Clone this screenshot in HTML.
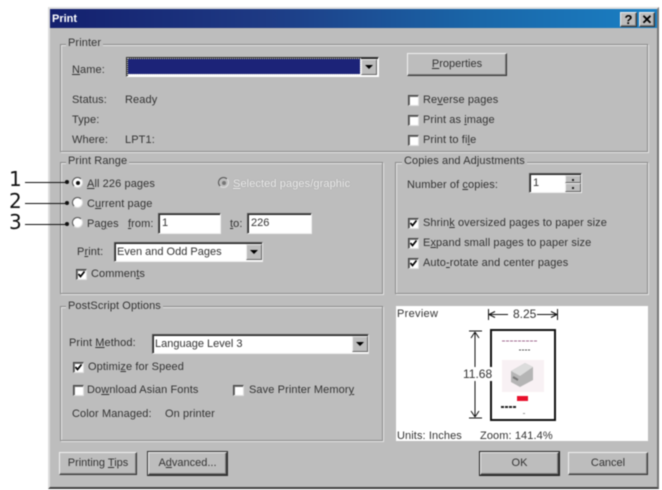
<!DOCTYPE html>
<html><head><meta charset="utf-8"><style>
html,body{margin:0;padding:0;width:662px;height:490px;overflow:hidden;background:#fff}
#w{position:relative;width:662px;height:490px;overflow:hidden;filter:blur(.5px);font-family:"Liberation Sans",sans-serif;font-size:11px;color:#333}
#w div{position:absolute;box-sizing:border-box}
.t{white-space:nowrap;line-height:14px;height:14px;letter-spacing:.1px}
.t.b{background:#bdbdbd;padding:0 2px}
.g{border:1px solid #8a8a8a;box-shadow:inset 1px 1px 0 #e6e6e6,1px 1px 0 #e6e6e6}
.btn{background:#bdbdbd;border:1px solid;border-color:#f0f0f0 #333 #333 #f0f0f0;box-shadow:inset -1px -1px 0 #808080;text-align:center;line-height:20px;white-space:nowrap}
.f{background:#fff;border:1px solid;border-color:#555 #eee #eee #555;box-shadow:inset 1px 1px 0 #222;line-height:18px;padding-left:3px;white-space:nowrap}
.c{width:11px;height:11px;background:#fff;border:1px solid;border-color:#444 #ddd #ddd #444;box-shadow:inset 1px 1px 0 #777}
.c svg{position:absolute;left:0;top:0}
.r{width:11px;height:11px;border-radius:50%;background:#fff;border:1px solid;border-color:#555 #ddd #ddd #555}
.r i{position:absolute;left:2.5px;top:2.5px;width:4px;height:4px;background:#111;border-radius:50%}
.a{background:#bdbdbd;border:1px solid;border-color:#eee #666 #666 #eee}
.a:after{content:"";position:absolute;left:3px;top:5px;border:4px solid transparent;border-top:4px solid #000;border-bottom:0}
.s{background:#bdbdbd;border:1px solid;border-color:#eee #666 #666 #eee}
.s i{position:absolute;left:6px;top:3px;width:2px;height:2px;background:#222}
.n{font-family:"DejaVu Sans",sans-serif;font-size:20px;color:#111;line-height:20px}
.l{background:#111;height:1px}
.dot{width:4px;height:4px;border-radius:50%;background:#111}
u{text-decoration:underline}
</style></head><body><div id="w">
<div style="left:48px;top:7px;width:611px;height:482px;background:#bdbdbd;border-top:2px solid #e2e2e2;border-left:2px solid #dcdcdc;border-right:2px solid #777;border-bottom:2px solid #444"></div>
<div style="left:50px;top:9px;width:607px;height:19px;background:linear-gradient(90deg,#14206e 0%,#1e3a84 35%,#1a66a8 70%,#1a80c4 100%)"></div>
<div class="t" style="left:52px;top:12px;color:#fff;font-weight:bold;letter-spacing:0">Print</div>
<div class="btn" style="left:620px;top:12px;width:17px;height:15px;line-height:13px;font-weight:bold;font-size:13px;color:#000;border-color:#eee #333 #333 #eee">?</div>
<div class="btn" style="left:639px;top:12px;width:16px;height:15px;line-height:13px;font-weight:bold;font-size:13px;color:#000;border-color:#eee #333 #333 #eee">✕</div>

<!-- Printer -->
<div class="g" style="left:60px;top:44px;width:588px;height:108px"></div>
<div class="t b" style="left:66px;top:36px">Printer</div>
<div class="t" style="left:72px;top:63px"><u>N</u>ame:</div>
<div class="f" style="left:126px;top:57px;width:253px;height:20px;padding:0;border-color:#333 #fff #fff #333"></div>
<div style="left:128px;top:59px;width:232px;height:15px;background:#1c2378;outline:1px dotted #ddd"></div>
<div class="a" style="left:361px;top:59px;width:16px;height:16px"></div>
<div class="t" style="left:72px;top:93px">Status:</div>
<div class="t" style="left:125px;top:93px">Ready</div>
<div class="t" style="left:72px;top:113px">Type:</div>
<div class="t" style="left:72px;top:133px">Where:</div>
<div class="t" style="left:125px;top:133px">LPT1:</div>
<div class="btn" style="left:407px;top:53px;width:100px;height:23px"><u>P</u>roperties</div>
<div class="c" style="left:408px;top:95px"></div><div class="t" style="left:423px;top:93px">Re<u>v</u>erse pages</div>
<div class="c" style="left:408px;top:115px"></div><div class="t" style="left:423px;top:113px">Print as <u>i</u>mage</div>
<div class="c" style="left:408px;top:135px"></div><div class="t" style="left:423px;top:133px">Print to fi<u>l</u>e</div>

<!-- Print Range -->
<div class="g" style="left:60px;top:162px;width:323px;height:132px"></div>
<div class="t b" style="left:66px;top:154px">Print Range</div>
<div class="r" style="left:72px;top:177px"><i></i></div><div class="t" style="left:87px;top:177px"><u>A</u>ll 226 pages</div>
<div class="r" style="left:218px;top:177px;background:#bdbdbd"><i style="background:#777"></i></div>
<div class="t" style="left:233px;top:177px;color:#eee;text-shadow:0 0 1px #888"><u>S</u>elected pages/graphic</div>
<div class="r" style="left:72px;top:197px"></div><div class="t" style="left:87px;top:197px">C<u>u</u>rrent page</div>
<div class="r" style="left:72px;top:217px"></div><div class="t" style="left:87px;top:217px">Pa<u>g</u>es</div>
<div class="t" style="left:128px;top:217px"><u>f</u>rom:</div>
<div class="f" style="left:158px;top:213px;width:63px;height:21px">1</div>
<div class="t" style="left:230px;top:217px"><u>t</u>o:</div>
<div class="f" style="left:247px;top:213px;width:65px;height:21px">226</div>
<div class="t" style="left:77px;top:245px">P<u>r</u>int:</div>
<div class="f" style="left:114px;top:242px;width:149px;height:20px;padding-left:2px">Even and Odd Pages</div>
<div class="a" style="left:246px;top:244px;width:16px;height:16px"></div>
<div class="c" style="left:76px;top:269px"><svg width="9" height="9"><path d="M1.5 4 L3.5 6.5 L7.5 1.5" stroke="#000" stroke-width="1.7" fill="none"/></svg></div>
<div class="t" style="left:91px;top:267px">Commen<u>t</u>s</div>

<!-- Copies -->
<div class="g" style="left:395px;top:162px;width:253px;height:132px"></div>
<div class="t b" style="left:402px;top:154px">Copies and Adjustments</div>
<div class="t" style="left:407px;top:178px">Number of <u>c</u>opies:</div>
<div class="f" style="left:529px;top:173px;width:53px;height:20px">1</div>
<div class="s" style="left:565px;top:175px;width:16px;height:8px"><i></i></div>
<div class="s" style="left:565px;top:183px;width:16px;height:9px"><i></i></div>
<div class="c" style="left:408px;top:218px"><svg width="9" height="9"><path d="M1.5 4 L3.5 6.5 L7.5 1.5" stroke="#000" stroke-width="1.7" fill="none"/></svg></div>
<div class="t" style="left:423px;top:216px">Shrin<u>k</u> oversized pages to paper size</div>
<div class="c" style="left:408px;top:238px"><svg width="9" height="9"><path d="M1.5 4 L3.5 6.5 L7.5 1.5" stroke="#000" stroke-width="1.7" fill="none"/></svg></div>
<div class="t" style="left:423px;top:236px">E<u>x</u>pand small pages to paper size</div>
<div class="c" style="left:408px;top:258px"><svg width="9" height="9"><path d="M1.5 4 L3.5 6.5 L7.5 1.5" stroke="#000" stroke-width="1.7" fill="none"/></svg></div>
<div class="t" style="left:423px;top:256px">Auto<u>-</u>rotate and center pages</div>

<!-- PostScript -->
<div class="g" style="left:60px;top:306px;width:323px;height:135px"></div>
<div class="t b" style="left:66px;top:299px">PostScript Options</div>
<div class="t" style="left:69px;top:336px">Print <u>M</u>ethod:</div>
<div class="f" style="left:152px;top:334px;width:217px;height:20px;padding-left:2px">Language Level 3</div>
<div class="a" style="left:352px;top:336px;width:16px;height:16px"></div>
<div class="c" style="left:73px;top:362px"><svg width="9" height="9"><path d="M1.5 4 L3.5 6.5 L7.5 1.5" stroke="#000" stroke-width="1.7" fill="none"/></svg></div>
<div class="t" style="left:88px;top:360px">Optimi<u>z</u>e for Speed</div>
<div class="c" style="left:73px;top:385px"></div><div class="t" style="left:87px;top:383px">Do<u>w</u>nload Asian Fonts</div>
<div class="c" style="left:233px;top:385px"></div><div class="t" style="left:249px;top:383px">Save Printer Memor<u>y</u></div>
<div class="t" style="left:72px;top:407px">Color Managed:</div>
<div class="t" style="left:165px;top:407px">On printer</div>

<!-- Preview -->
<div style="left:396px;top:306px;width:252px;height:135px;background:#fff"></div>
<div class="t" style="left:397px;top:307px;letter-spacing:.3px">Preview</div>
<svg style="position:absolute;left:396px;top:306px" width="252" height="135" fill="none" stroke="#111" stroke-width="1">
<path d="M92.5 3 V14 M161.5 3 V14 M93 8.5 H112 M138 8.5 H161 M93 8.5 l6 -3 M93 8.5 l6 3 M161 8.5 l-6 -3 M161 8.5 l-6 3"/>
<path d="M73 25 H86 M73 112 H86 M79 26 V111 M79 26 l-4 6 M79 26 l4 6 M79 111 l-4 -6 M79 111 l4 -6"/>
<rect x="95" y="24" width="64" height="90" stroke-width="2"/>
<path d="M106 35 H142" stroke="#a06a90" stroke-width="1" stroke-dasharray="3 1"/>
<path d="M123 44 H134" stroke="#555" stroke-width="1" stroke-dasharray="2 1"/>
<rect x="106" y="54" width="42" height="32" fill="#f8f1f4" stroke="none"/>
<path d="M115 65 L129 57 L137 61 L137 74 L124 81 L115 76 Z" fill="#b5b5b5" stroke="none"/>
<path d="M115 65 L124 70 L137 61 L129 57 Z" fill="#dcdcdc" stroke="none"/>
<path d="M117 71 L122 74" stroke="#777" stroke-width="2"/>
<rect x="121" y="90" width="11" height="5" fill="#e8102c" stroke="none"/>
<path d="M105 101 H120" stroke="#222" stroke-width="2" stroke-dasharray="3 1"/>
<rect x="127" y="107" width="2" height="1" fill="#999" stroke="none"/>
</svg>
<div class="t" style="left:512px;top:307px;background:#fff;padding:0 1px;font-size:12px;letter-spacing:0">8.25</div>
<div class="t" style="left:463px;top:367px;background:#fff;font-size:12px;letter-spacing:0">11.68</div>
<div class="t" style="left:397px;top:430px;height:11px;line-height:12px;overflow:hidden">Units: Inches</div>
<div class="t" style="left:480px;top:430px;height:11px;line-height:12px;overflow:hidden">Zoom: 141.4%</div>

<!-- Buttons -->
<div class="btn" style="left:59px;top:452px;width:78px;height:23px">Printing <u>T</u>ips</div>
<div class="btn" style="left:148px;top:452px;width:79px;height:23px;outline:1px solid #333">A<u>d</u>vanced...</div>
<div class="btn" style="left:480px;top:452px;width:79px;height:23px;outline:1px solid #222">OK</div>
<div class="btn" style="left:568px;top:452px;width:80px;height:23px">Cancel</div>

<!-- Callouts -->
<div class="n" style="left:9px;top:169px">1</div>
<div class="n" style="left:9px;top:191px">2</div>
<div class="n" style="left:9px;top:212px">3</div>
<div class="l" style="left:25px;top:182px;width:43px"></div><div class="dot" style="left:65px;top:180px"></div>
<div class="l" style="left:25px;top:203px;width:43px"></div><div class="dot" style="left:65px;top:201px"></div>
<div class="l" style="left:25px;top:224px;width:43px"></div><div class="dot" style="left:65px;top:222px"></div>
</div></body></html>
